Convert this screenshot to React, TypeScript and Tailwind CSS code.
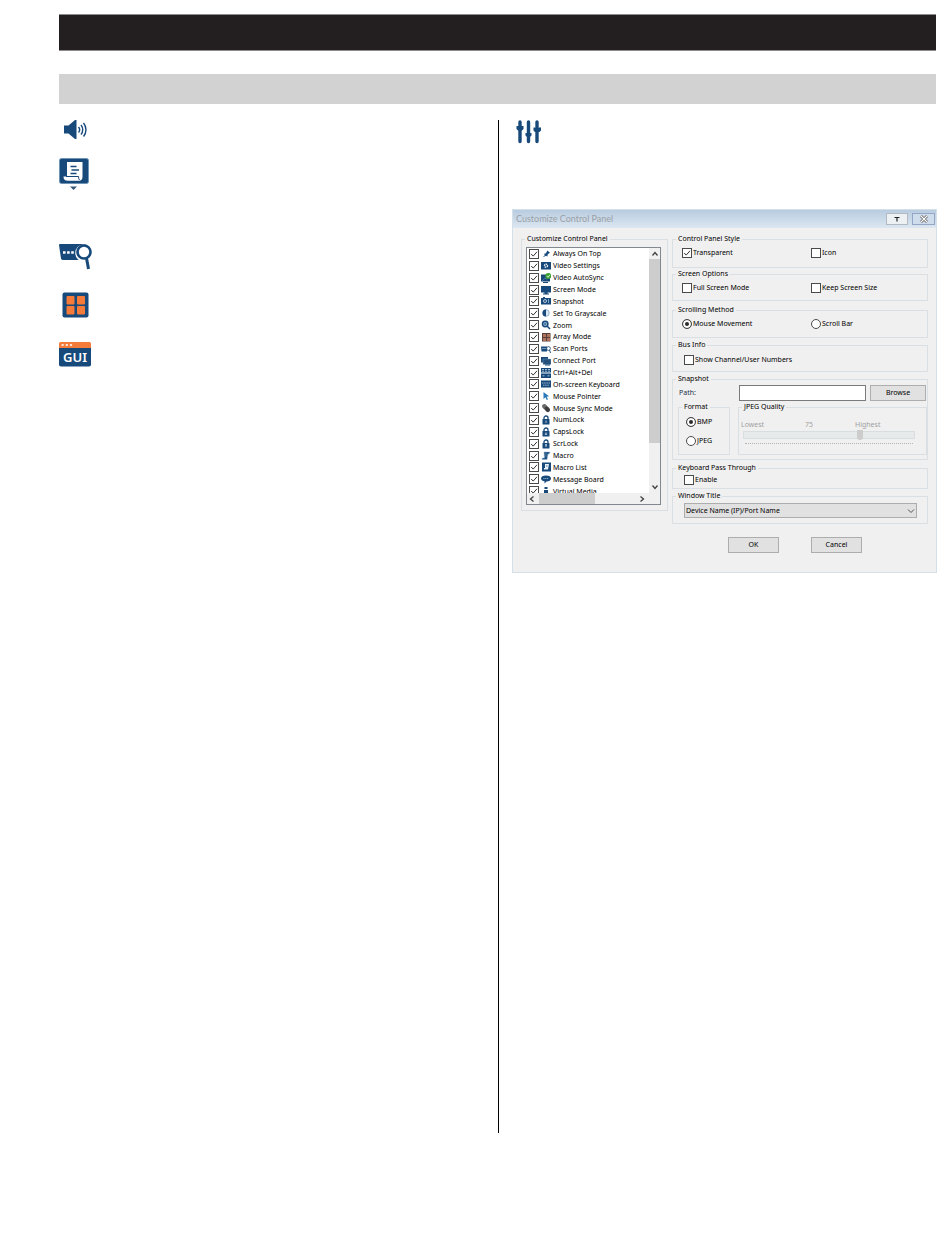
import React, { useState } from 'react';

const NAVY = '#17497b';
const ORANGE = '#f47b3a';

const items: { label: string; icon: React.ReactNode }[] = [
  { label: 'Always On Top', icon: <path d="M1.5 8.5 4 6 2.8 4.9 5 4.2 6.3 1.5 9 3.8 6.8 5.2 6.3 7.4 5 6.8Z" fill={NAVY} /> },
  {
    label: 'Video Settings',
    icon: (
      <>
        <rect x="0" y="1" width="10" height="7.500" fill={NAVY} />
        <circle cx="5" cy="4.700" r="1.500" fill="none" stroke="#fff" strokeWidth="1.300" strokeDasharray="1.400 .6" />
      </>
    ),
  },
  {
    label: 'Video AutoSync',
    icon: (
      <>
        <path d="M0 1.500h9v7H0zM2 9h5v1H2z" fill={NAVY} />
        <circle cx="7.3" cy="3" r="3" fill="#3aa535" />
        <path d="m5.8 3 1.2 1.3L9 1.8" fill="none" stroke="#d8f0c8" />
        <path d="m1 8 3-3 1.5 1.500" fill="none" stroke="#5f93ab" strokeWidth=".6" />
      </>
    ),
  },
  { label: 'Screen Mode', icon: <path d="M0 1h10v6.500H6.500V8.500H8v1H2v-1h1.500v-1H0z" fill={NAVY} /> },
  {
    label: 'Snapshot',
    icon: (
      <>
        <path d="M0 2h2V1h2v1h6v6.500H0z" fill={NAVY} />
        <circle cx="4" cy="5" r="1.500" fill="none" stroke="#dbe8f4" strokeWidth=".8" />
        <path d="M7.500 3v4" stroke="#9fbdd8" strokeWidth=".8" />
      </>
    ),
  },
  {
    label: 'Set To Grayscale',
    icon: (
      <>
        <circle cx="5" cy="5" r="3.300" fill="#dbe8f4" stroke="#7fa3c4" strokeWidth=".8" />
        <path d="M5 1.500a3.500 3.500 0 0 0 0 7z" fill={NAVY} />
      </>
    ),
  },
  {
    label: 'Zoom',
    icon: (
      <>
        <circle cx="4.200" cy="4" r="2.700" fill="#9dc0de" stroke={NAVY} strokeWidth="1.500" />
        <path d="m6 6 3 3" stroke={NAVY} strokeWidth="1.600" />
        <path d="M4.200 2.800v2.400M3 4h2.400" stroke={NAVY} strokeWidth=".7" />
      </>
    ),
  },
  {
    label: 'Array Mode',
    icon: (
      <>
        <rect x="1" y="1" width="8.500" height="8.500" fill="#54403f" />
        <path d="M2 2h3v3H2zM6 2h3v3H6zM2 6h3v3H2zM6 6h3v3H6z" fill="#b0735a" />
      </>
    ),
  },
  {
    label: 'Scan Ports',
    icon: (
      <>
        <path d="M0 2.500h6v5H.5z" fill={NAVY} />
        <path d="M1.500 4.500h3" stroke="#fff" strokeWidth=".8" strokeDasharray=".8 .4" />
        <circle cx="7.500" cy="4.500" r="1.900" fill="#fff" stroke={NAVY} strokeWidth=".8" />
        <path d="m8.500 6 1 3" stroke={NAVY} />
      </>
    ),
  },
  {
    label: 'Connect Port',
    icon: (
      <>
        <path d="M0 1h7v5.500H0z" fill={NAVY} />
        <path d="M2 3h8v5.500H2z" fill="#24507a" stroke="#8fadc8" strokeWidth=".4" />
        <path d="M4 8.500h5v1H4z" fill={NAVY} />
      </>
    ),
  },
  {
    label: 'Ctrl+Alt+Del',
    icon: (
      <>
        <path d="M0 0h10v4.500H0zM0 5.500h10V10H0z" fill={NAVY} />
        <path d="M1 1.500h2M4 1.500h2M7 1.500h2M1 3.200h2M4 3.200h2M7 3.200h2M1.500 7.800h2M6.500 7.800h2" stroke="#c4d9ec" strokeWidth=".8" />
      </>
    ),
  },
  {
    label: 'On-screen Keyboard',
    icon: (
      <>
        <rect x="0" y="1.500" width="10" height="7" fill={NAVY} />
        <path d="M1 4h8M2 6.200h6" stroke="#bcd4e8" strokeWidth=".8" strokeDasharray="1.200 .5" />
      </>
    ),
  },
  { label: 'Mouse Pointer', icon: <path d="M2.500 1 8 5.300l-2.300.4L7 8.500l-1.300.6L4.500 6.300 2.500 8z" fill="#2a78b8" /> },
  {
    label: 'Mouse Sync Mode',
    icon: (
      <>
        <ellipse cx="3.800" cy="3.800" rx="2.300" ry="3" transform="rotate(-40 3.800 3.800)" fill="#6a6a6c" />
        <ellipse cx="6.300" cy="6.300" rx="2.300" ry="3" transform="rotate(-40 6.300 6.300)" fill="#3d3d40" />
      </>
    ),
  },
  { label: 'NumLock', icon: <Lock mark="M5 5.500v2.500" /> },
  { label: 'CapsLock', icon: <Lock mark="M3.800 7.200h2.400M5 5.500v2" /> },
  { label: 'ScrLock', icon: <Lock mark="M5 5v3M4 6h2" /> },
  {
    label: 'Macro',
    icon: <path d="M3 1h6L8 3H7L6 8.500H1L1.500 7h2zM4 3h2.500M4 5h2" fill={NAVY} stroke="#8db1d0" strokeWidth=".5" />,
  },
  {
    label: 'Macro List',
    icon: (
      <>
        <rect x="1" y="0.500" width="9" height="9" fill={NAVY} />
        <path d="M4 2h4L7 7.500H3V6h1z" fill="#e8f1f8" />
        <path d="M5 4h1.500" stroke={NAVY} strokeWidth=".7" />
      </>
    ),
  },
  {
    label: 'Message Board',
    icon: (
      <>
        <path d="M5 1.500c3 0 5 1.300 5 3S8 7.500 5.500 7.500L3.500 9.500V7.300C1.300 7 0 6 0 4.500c0-1.700 2-3 5-3z" fill={NAVY} />
        <path d="M2.500 4.500h5" stroke="#cfe0ef" strokeWidth=".8" strokeDasharray="1 .8" />
      </>
    ),
  },
  { label: 'Virtual Media', icon: <path d="M3.500 1h3v2h-3zM3 4h4v6H3z" fill={NAVY} /> },
];

function Lock({ mark }: { mark: string }) {
  return (
    <>
      <path d="M3 4.500V3a2 2 0 0 1 4 0v1.500" fill="none" stroke={NAVY} strokeWidth="1.300" />
      <rect x="1.500" y="4" width="7" height="5.500" rx=".5" fill={NAVY} />
      <path d={mark} stroke="#e0ebf5" strokeWidth=".8" />
    </>
  );
}

function CheckBox({ label, icon, defaultChecked }: { label: string; icon?: React.ReactNode; defaultChecked?: boolean }) {
  return (
    <label className="flex items-center gap-px whitespace-nowrap">
      <span className="grid size-[10px] shrink-0">
        <input
          type="checkbox"
          defaultChecked={defaultChecked}
          className="peer col-start-1 row-start-1 size-[10px] appearance-none border border-[#4a4a4a] bg-white"
        />
        <svg viewBox="0 0 10 10" className="pointer-events-none invisible col-start-1 row-start-1 size-[10px] peer-checked:visible">
          <path d="m2.200 5 2 2.100L8 2.800" fill="none" stroke="#333" strokeWidth="1" />
        </svg>
      </span>
      {icon && (
        <svg viewBox="0 0 10 10" className="mx-px size-[10px] shrink-0">
          {icon}
        </svg>
      )}
      <span>{label}</span>
    </label>
  );
}

function Radio({ name, label, defaultChecked }: { name: string; label: string; defaultChecked?: boolean }) {
  return (
    <label className="flex items-center gap-px whitespace-nowrap">
      <input
        type="radio"
        name={name}
        defaultChecked={defaultChecked}
        className="size-[10px] shrink-0 appearance-none rounded-full border border-[#4a4a4a] bg-white checked:bg-[#2b2b2b] checked:shadow-[inset_0_0_0_2px_#fff]"
      />
      <span>{label}</span>
    </label>
  );
}

function Group({ title, className, children }: { title: string; className?: string; children: React.ReactNode }) {
  return (
    <fieldset className={`min-w-0 border border-[#d9dfe3] ${className ?? ''}`}>
      <legend className="ml-[3px] h-3 px-[2px]">{title}</legend>
      {children}
    </fieldset>
  );
}

// two options side by side inside a group
function Pair({ children }: { children: React.ReactNode }) {
  return <div className="grid grid-cols-[129px_1fr] pt-[2px] pl-[9px]">{children}</div>;
}

function Chevron({ d }: { d: string }) {
  return (
    <svg viewBox="0 0 10 10" className="size-[10px]">
      <path d={d} fill="none" stroke="#404040" strokeWidth="1.300" />
    </svg>
  );
}

function ItemList() {
  return (
    <div className="mt-[2px] mr-[6px] mb-[5px] ml-[4px] flex h-[258px] flex-col border border-[#828790] bg-white">
      <div className="flex min-h-0 flex-1">
        <div className="min-w-0 flex-1 overflow-hidden">
          <ul className="flex h-[249px] flex-col pl-[2px] leading-[11px]">
            {items.map((item) => (
              <li key={item.label} className="flex flex-1 items-center">
                <CheckBox label={item.label} icon={item.icon} defaultChecked />
              </li>
            ))}
          </ul>
        </div>
        <div className="flex w-[11px] flex-col items-center bg-[#f0f0f0]">
          <button type="button" aria-label="Scroll up" className="h-[11px]">
            <Chevron d="m2.500 6.500 2.500-3 2.500 3" />
          </button>
          <div className="h-[184px] w-full bg-[#cdcdcd]" />
          <button type="button" aria-label="Scroll down" className="mt-auto h-3">
            <Chevron d="m2.500 3.500 2.500 3 2.500-3" />
          </button>
        </div>
      </div>
      <div className="flex h-[11px] items-center bg-[#f0f0f0]">
        <button type="button" aria-label="Scroll left" className="w-3">
          <Chevron d="m6.500 2.500-3 2.500 3 2.500" />
        </button>
        <div className="h-full w-14 bg-[#cdcdcd]" />
        <button type="button" aria-label="Scroll right" className="mr-[13px] ml-auto">
          <Chevron d="m3.500 2.500 3 2.500-3 2.500" />
        </button>
      </div>
    </div>
  );
}

const buttonClass = 'border border-[#adadad] bg-[#e1e1e1] text-center';

function ControlPanelDialog() {
  const [quality, setQuality] = useState(75);

  return (
    <section className="border border-[#d3e0ea] bg-[#f0f0f0] font-['Noto_Sans',sans-serif] text-[7px] leading-[12px] text-black">
      <header className="flex h-[18px] items-center bg-linear-to-b from-[#b8cce0] to-[#dce7f1] pr-px pl-[3px]">
        <h2 className="font-[Lato,sans-serif] text-[9px] text-[#9a9fa6]">Customize Control Panel</h2>
        <button type="button" aria-label="Pin" className="ml-auto flex h-[12px] w-[22px] items-center justify-center border border-[#b4bac2] bg-[#eef1f4]">
          <svg viewBox="0 0 8 8" className="size-2">
            <path d="M1.500 2.500h5M4 2.500v4" stroke="#222" strokeWidth="1.200" />
          </svg>
        </button>
        <button type="button" aria-label="Close" className="ml-[4px] flex h-[12px] w-[23px] items-center justify-center border border-[#94a6c6] bg-[#cfdcec]">
          <svg viewBox="0 0 10 8" className="h-2 w-[10px]">
            <path d="m2 1 6 6M8 1 2 7" stroke="#555" strokeWidth="2.600" />
            <path d="m2 1 6 6M8 1 2 7" stroke="#fff" strokeWidth="1.200" />
          </svg>
        </button>
      </header>

      <div className="flex gap-[4px] px-2 pt-[5px]">
        <Group title="Customize Control Panel" className="w-[147px] shrink-0 self-start">
          <ItemList />
        </Group>

        <div className="min-w-0 flex-1">
          <Group title="Control Panel Style" className="h-[35px]">
            <Pair>
              <CheckBox label="Transparent" defaultChecked />
              <CheckBox label="Icon" />
            </Pair>
          </Group>
          <Group title="Screen Options" className="h-[33px]">
            <Pair>
              <CheckBox label="Full Screen Mode" />
              <CheckBox label="Keep Screen Size" />
            </Pair>
          </Group>
          <Group title="Scrolling Method" className="mt-[3px] h-[34px]">
            <Pair>
              <Radio name="scrolling" label="Mouse Movement" defaultChecked />
              <Radio name="scrolling" label="Scroll Bar" />
            </Pair>
          </Group>
          <Group title="Bus Info" className="mt-px h-[33px]">
            <div className="pt-[3px] pl-[11px]">
              <CheckBox label="Show Channel/User Numbers" />
            </div>
          </Group>

          <Group title="Snapshot" className="mt-px h-[87px]">
            <div className="flex h-4 items-center pr-px pl-[6px]">
              <label htmlFor="snapshot-path" className="w-[60px] text-[#1c2f4a]">Path:</label>
              <input id="snapshot-path" type="text" className="h-4 min-w-0 flex-1 border border-[#7a7a7a] bg-white px-1" />
              <button type="button" className={`${buttonClass} ml-[4px] h-4 w-[56px]`}>Browse</button>
            </div>
            <div className="flex items-start gap-2 pl-[5px]">
              <Group title="Format" className="h-[54px] w-[52px]">
                <div className="flex flex-col gap-[7px] pt-[3px] pl-[7px]">
                  <Radio name="format" label="BMP" defaultChecked />
                  <Radio name="format" label="JPEG" />
                </div>
              </Group>
              <Group title="JPEG Quality" className="h-[54px] flex-1">
                <div className="mt-[6px] grid grid-cols-[64px_50px_1fr] pl-[2px] text-[#a0a0a0]">
                  <span>Lowest</span>
                  <output htmlFor="jpeg-quality">{quality}</output>
                  <span>Highest</span>
                </div>
                <input
                  id="jpeg-quality"
                  aria-label="JPEG Quality"
                  type="range"
                  min={20}
                  max={100}
                  value={quality}
                  disabled
                  onChange={(e) => setQuality(Number(e.target.value))}
                  className="mx-[4px] block h-[8px] w-[172px] appearance-none border border-[#d8dedf] bg-[#e7eaea] [&::-webkit-slider-thumb]:h-[10px] [&::-webkit-slider-thumb]:w-[6px] [&::-webkit-slider-thumb]:appearance-none [&::-webkit-slider-thumb]:rounded-b-[3px] [&::-webkit-slider-thumb]:bg-[#cccccc]"
                />
                <div className="mx-[6px] mt-[4px] w-[168px] border-t border-dotted border-[#b5b5b5]" />
              </Group>
            </div>
          </Group>

          <Group title="Keyboard Pass Through" className="mt-[2px] h-[27px]">
            <div className="pl-[11px]">
              <CheckBox label="Enable" />
            </div>
          </Group>
          <Group title="Window Title" className="mt-px h-[34px]">
            <div className="mt-px mr-[10px] ml-[11px] grid items-center">
              <select aria-label="Window Title" className="col-start-1 row-start-1 h-[15px] w-full appearance-none border border-[#adadad] bg-[#e1e1e1] pl-px">
                <option>Device Name (IP)/Port Name</option>
              </select>
              <svg viewBox="0 0 8 8" className="pointer-events-none col-start-1 row-start-1 mr-[2px] size-2 justify-self-end">
                <path d="m1 2.500 3 3 3-3" fill="none" stroke="#555" />
              </svg>
            </div>
          </Group>
        </div>
      </div>

      <footer className="flex justify-end gap-8 pt-[13px] pr-[74px] pb-[19px]">
        <button type="button" className={`${buttonClass} h-4 w-[51px]`}>OK</button>
        <button type="button" className={`${buttonClass} h-4 w-[51px]`}>Cancel</button>
      </footer>
    </section>
  );
}

function ToolIcons() {
  return (
    <div className="flex flex-col items-start">
      <svg viewBox="0 0 24 20" className="ml-[5px] h-5 w-6">
        <path d="M0 5.500h4.500L11 0h1.500v19H11l-6.500-5.500H0z" fill={NAVY} />
        <path d="M14.500 7c1.300 1.500 1.300 4 0 5.500M17 5c2.300 2.700 2.300 7 0 9.500M19.500 3c3.300 4 3.300 9.500 0 13.500" fill="none" stroke={NAVY} strokeWidth="1.400" />
      </svg>

      <svg viewBox="0 0 30 34" className="mt-[18px] h-[34px] w-[30px]">
        <rect x="0.500" y="0.500" width="29" height="25" rx="2" fill={NAVY} stroke="#6d93b5" />
        <path d="M8 4h15.500v14.500q0 4-3 4H8z" fill="#fff" />
        <path d="M11.500 8.500h6M12.500 12h7.500M11.500 15.500h6" stroke={NAVY} strokeWidth="1.500" />
        <path d="M4.500 18.500h15.500q-.5 2.500 1.500 4H7q-2.500-.5-2.500-4z" fill="#fff" />
        <path d="M7 18.500h12.500q0 2.500 1 3.500" fill="none" stroke={NAVY} strokeWidth="1" />
        <path d="M11 28.500h7l-3.500 3.500z" fill="#35587a" />
      </svg>

      <svg viewBox="0 0 34 27" className="mt-[51px] h-[27px] w-[34px]">
        <path d="M0 2q0-1 1-1h27v16H4q-1.500 0-2-1.500z" fill={NAVY} />
        <path d="M4 9.500h12" stroke="#fff" strokeWidth="2.600" strokeDasharray="2.600 1.500" />
        <circle cx="25" cy="10" r="7.500" fill="#fff" stroke="#fff" strokeWidth="2.500" />
        <path d="M27 0h7v18h-7z" fill="#fff" />
        <circle cx="25" cy="9" r="6.500" fill="#fff" stroke={NAVY} strokeWidth="2.600" />
        <path d="m27.500 15 2 11" stroke={NAVY} strokeWidth="3" />
      </svg>

      <svg viewBox="0 0 28 26" className="mt-[22px] ml-[3px] h-[26px] w-[28px]">
        <rect x="0.500" y="0.500" width="26" height="25" rx="2" fill={NAVY} />
        <path
          d="M5 4.500h7V12H5zM15.500 4.500h7V12h-7zM5 14.500h7V22H5zM15.500 14.500h7V22h-7z"
          fill={ORANGE}
          stroke={ORANGE}
          strokeLinejoin="round"
        />
      </svg>

      <svg viewBox="0 0 32 25" className="mt-6 h-[25px] w-8">
        <path d="M1.500 0h29q1.500 0 1.500 1.500V6H0V1.500Q0 0 1.500 0z" fill={ORANGE} />
        <path d="M0 6h32v16.500q0 2-2 2H2q-2 0-2-2z" fill={NAVY} />
        <path d="M2.500 3h11" stroke="#fde3d4" strokeWidth="1.800" strokeDasharray="2.200 2" />
        <text x="16" y="20" textAnchor="middle" fontFamily="Noto Sans, sans-serif" fontWeight="600" fontSize="13" fill="#fff">GUI</text>
      </svg>
    </div>
  );
}

export default function App() {
  return (
    <div className="flex min-h-screen flex-col bg-white pt-[14px] pr-[13px] pb-[115px] pl-[59px]">
      <div className="mr-px h-[37px] border-y border-[#8c8c8c] bg-[#231f20]" />
      <div className="mt-[23px] mr-px h-[30px] bg-[#d2d2d2]" />

      <main className="mt-4 grid flex-1 grid-cols-2">
        <ToolIcons />
        <div className="border-l border-black pl-[13px]">
          <svg viewBox="0 0 26 24" className="ml-[4px] h-6 w-[26px]">
            <path d="M4 2v4M4 10v11.500M12.500 2v11M12.500 17v4.500M21 2v5M21 11v10.500" stroke={NAVY} strokeWidth="3.400" strokeLinecap="round" />
            <path d="M.5 6h7v3L6 10.500H2L.5 9zM9.500 13h6v2.500L14 17h-3l-1.500-1.500zM17.500 7.500h7.500v3L23.500 12H19l-1.500-1.500z" fill={NAVY} />
          </svg>
          <div className="mt-[65px]">
            <ControlPanelDialog />
          </div>
        </div>
      </main>
    </div>
  );
}
